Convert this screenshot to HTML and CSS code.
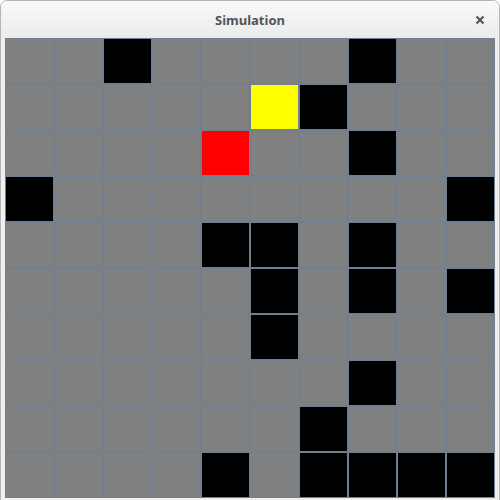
FILE: index.html
```html
<!DOCTYPE html>
<html>
<head>
<meta charset="utf-8">
<title>Simulation</title>
<link rel="stylesheet" href="styles.css">
</head>
<body>
<div class="window">
  <div class="titlebar">
    <span class="spacer"></span>
    <span class="title">Simulation</span>
    <span class="actions">
      <button class="close" aria-label="Close">
        <svg width="10" height="10" viewBox="0 0 10 10"><path d="M1.5 1.5 L8.5 8.5 M8.5 1.5 L1.5 8.5" stroke="#545b61" stroke-width="2.3" stroke-linecap="butt" fill="none"/></svg>
      </button>
    </span>
  </div>
  <div class="content">
    <div class="grid">
      <div class="cell"></div><div class="cell"></div><div class="cell wall"></div><div class="cell"></div><div class="cell"></div><div class="cell"></div><div class="cell"></div><div class="cell wall"></div><div class="cell"></div><div class="cell"></div>
      <div class="cell"></div><div class="cell"></div><div class="cell"></div><div class="cell"></div><div class="cell"></div><div class="cell goal"></div><div class="cell wall"></div><div class="cell"></div><div class="cell"></div><div class="cell"></div>
      <div class="cell"></div><div class="cell"></div><div class="cell"></div><div class="cell"></div><div class="cell agent"></div><div class="cell"></div><div class="cell"></div><div class="cell wall"></div><div class="cell"></div><div class="cell"></div>
      <div class="cell wall"></div><div class="cell"></div><div class="cell"></div><div class="cell"></div><div class="cell"></div><div class="cell"></div><div class="cell"></div><div class="cell"></div><div class="cell"></div><div class="cell wall"></div>
      <div class="cell"></div><div class="cell"></div><div class="cell"></div><div class="cell"></div><div class="cell wall"></div><div class="cell wall"></div><div class="cell"></div><div class="cell wall"></div><div class="cell"></div><div class="cell"></div>
      <div class="cell"></div><div class="cell"></div><div class="cell"></div><div class="cell"></div><div class="cell"></div><div class="cell wall"></div><div class="cell"></div><div class="cell wall"></div><div class="cell"></div><div class="cell wall"></div>
      <div class="cell"></div><div class="cell"></div><div class="cell"></div><div class="cell"></div><div class="cell"></div><div class="cell wall"></div><div class="cell"></div><div class="cell"></div><div class="cell"></div><div class="cell"></div>
      <div class="cell"></div><div class="cell"></div><div class="cell"></div><div class="cell"></div><div class="cell"></div><div class="cell"></div><div class="cell"></div><div class="cell wall"></div><div class="cell"></div><div class="cell"></div>
      <div class="cell"></div><div class="cell"></div><div class="cell"></div><div class="cell"></div><div class="cell"></div><div class="cell"></div><div class="cell wall"></div><div class="cell"></div><div class="cell"></div><div class="cell"></div>
      <div class="cell"></div><div class="cell"></div><div class="cell"></div><div class="cell"></div><div class="cell wall"></div><div class="cell"></div><div class="cell wall"></div><div class="cell wall"></div><div class="cell wall"></div><div class="cell wall"></div>
    </div>
  </div>
</div>
</body>
</html>
```

FILE: styles.css
```css
html, body {
  margin: 0;
  padding: 0;
  background: #ffffff;
  overflow: hidden;
}
.window {
  width: 500px;
  height: 510px;
  box-sizing: border-box;
  border: 1px solid #b4b4b4;
  border-radius: 7px 7px 0 0;
  background: #efefef;
  overflow: hidden;
}
.titlebar {
  height: 37px;
  display: grid;
  grid-template-columns: 1fr auto 1fr;
  align-items: center;
  background: linear-gradient(to bottom, #f9f9f9, #ebebeb);
}
.title {
  font-family: "Noto Sans", sans-serif;
  font-weight: 700;
  font-size: 13px;
  color: #4f565c;
  padding-top: 1px;
}
.actions {
  display: flex;
  justify-content: flex-end;
  padding-right: 13px;
}
.close {
  border: 0;
  background: transparent;
  padding: 0;
  width: 12px;
  height: 12px;
  display: flex;
  align-items: center;
  justify-content: center;
}
.content {
  padding: 0 4px;
}
.grid {
  display: grid;
  grid-template-columns: repeat(10, 49px);
  grid-template-rows: repeat(10, 46px);
}
.cell {
  box-sizing: border-box;
  border: 1px solid #708090;
  background: #808080;
}
.cell.wall { background: #000000; }
.cell.goal { background: #ffff00; }
.cell.agent { background: #ff0000; }
```
